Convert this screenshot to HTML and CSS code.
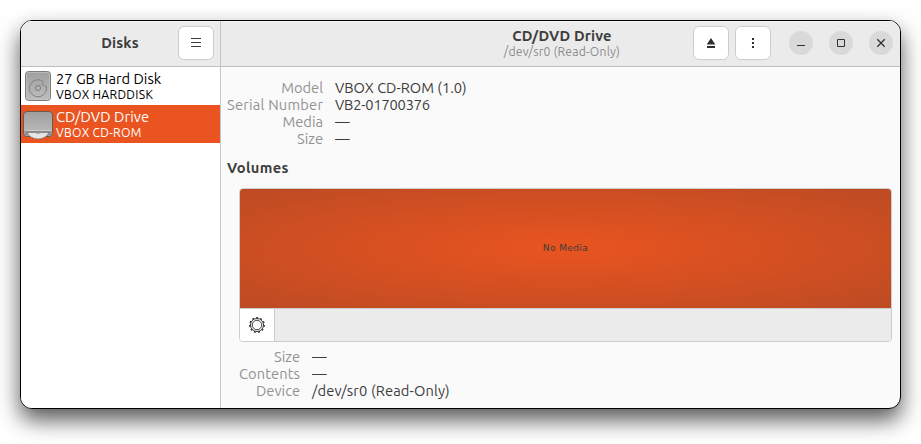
FILE: index.html
```html
<!DOCTYPE html>
<html lang="en">
<head>
<meta charset="utf-8">
<title>Disks</title>
<link rel="stylesheet" href="styles.css">
</head>
<body>
<div class="window">
  <aside class="sidebar">
    <header class="bar side-bar">
      <h1 class="app-title"><span class="t-disks">Disks</span></h1>
      <button class="btn" aria-label="Menu"><svg width="16" height="16"><path d="M3 3.5h10M3 7.5h10M3 11.5h10" stroke="#3d3d3d"/></svg></button>
    </header>
    <ul class="drives">
      <li class="drive">
        <svg class="drive-icon" width="32" height="32" viewBox="0 0 32 32">
          <defs><linearGradient id="metal" x1="0" y1="0" x2="0" y2="1"><stop offset="0" stop-color="#9f9f9f"/><stop offset=".3" stop-color="#a8a8a8"/><stop offset="1" stop-color="#bebebe"/></linearGradient></defs>
          <rect x="2.5" y="1.5" width="25" height="29" rx="3" fill="url(#metal)" stroke="#7c7c7c"/>
          <rect x="3.5" y="2.5" width="23" height="27" rx="2" fill="none" stroke="#c6c6c6" stroke-opacity=".6"/>
          <path d="M20.5 11.8A8.5 8.5 0 1 0 23.3 16.5M20.5 11.8Q17.500 14 19.500 15T23.3 16.5" fill="none" stroke="#808080"/>
          <circle cx="15" cy="18" r="2.6" fill="none" stroke="#808080"/>
        </svg>
        <div class="drive-text"><span class="name t-hd">27 GB Hard Disk</span><span class="model t-hdm">VBOX HARDDISK</span></div>
      </li>
      <li class="drive selected">
        <svg class="drive-icon" width="32" height="32" viewBox="0 0 32 32">
          <rect x=".5" y="3.5" width="29" height="25" rx="3.5" fill="url(#metal)" stroke="#6a5a55"/>
          <path d="M1.500 22.500h27v2.500q0 2.500-2.500 2.500h-22q-2.500 0-2.500-2.500z" fill="#8c8c8c"/>
          <path d="M2 22.500h26" stroke="#ccc"/>
          <path d="M4 24.500h22q-3.500 6.500-11 6.500t-11-6.500z" fill="#e6e6e6" stroke="#777" stroke-width=".7"/>
          <path d="M12 24.800q3 2.700 6 0z" fill="#aaa"/>
        </svg>
        <div class="drive-text"><span class="name t-cd">CD/DVD Drive</span><span class="model t-cdm">VBOX CD-ROM</span></div>
      </li>
    </ul>
  </aside>
  <main class="main">
    <header class="bar main-bar">
      <div class="heading"><h2><span class="t-title">CD/DVD Drive</span></h2><p><span class="t-sub">/dev/sr0 (Read-Only)</span></p></div>
      <div class="actions">
        <button class="btn" aria-label="Eject"><svg width="16" height="16"><path d="M8 3l4.300 6.500H3.700zM4 11h8v2H4z" fill="#303030"/></svg></button>
        <button class="btn" aria-label="Drive options"><svg width="16" height="16"><path d="M7 3h2v2H7zM7 7h2v2H7zM7 11h2v2H7z" fill="#303030"/></svg></button>
      </div>
      <div class="controls">
        <button class="round" aria-label="Minimize"><svg width="16" height="16"><path d="M4 10.500h8" stroke="#303030"/></svg></button>
        <button class="round" aria-label="Maximize"><svg width="16" height="16"><path d="M4.500 4.500h7v7h-7z" fill="none" stroke="#303030"/></svg></button>
        <button class="round" aria-label="Close"><svg width="16" height="16"><path d="M4.300 4.300l7.400 7.400M11.700 4.300l-7.400 7.400" stroke="#303030" stroke-width="1.300"/></svg></button>
      </div>
    </header>
    <section class="content">
      <dl class="info info-drive">
        <dt><span class="t-model">Model</span></dt><dd><span class="t-vbox">VBOX CD-ROM (1.0)</span></dd>
        <dt><span class="t-serial">Serial Number</span></dt><dd><span class="t-sn">VB2-01700376</span></dd>
        <dt><span class="t-media">Media</span></dt><dd><span class="dash">—</span></dd>
        <dt><span class="t-size">Size</span></dt><dd><span class="dash">—</span></dd>
      </dl>
      <h3><span class="t-vol">Volumes</span></h3>
      <div class="volume">
        <div class="media"><span class="t-nomedia">No Media</span></div>
        <div class="toolbar">
          <button class="gear" aria-label="Volume options"><svg width="18" height="18" viewBox="0 0 18 18"><g fill="none" stroke="#303030"><circle cx="9" cy="9" r="6.500" stroke-width="1"/><circle cx="9" cy="9" r="4.700" stroke-width=".9"/><circle cx="9" cy="9" r="7.300" stroke-width="1.200" stroke-dasharray="2 2.170"/></g></svg></button>
        </div>
      </div>
      <dl class="info info-volume">
        <dt><span class="t-size">Size</span></dt><dd><span class="dash">—</span></dd>
        <dt><span class="t-contents">Contents</span></dt><dd><span class="dash">—</span></dd>
        <dt><span class="t-device">Device</span></dt><dd><span class="t-dev">/dev/sr0 (Read-Only)</span></dd>
      </dl>
    </section>
  </main>
</div>
</body>
</html>
```
FILE: styles.css
```css
* { box-sizing: border-box; margin: 0; padding: 0; }
body { height: 444px; padding: 20px; background: #fff; overflow: hidden; font: 14.667px/17px Ubuntu, "Noto Sans", sans-serif; color: #3d3d3d; }
span { white-space: nowrap; }
button { border: 0; display: flex; align-items: center; justify-content: center; flex: none; }
.window { width: 881px; height: 389px; display: flex; border: 1px solid #000; border-radius: 12px; overflow: hidden; background: #fafafa; box-shadow: 0 11px 22px rgba(0,0,0,.66); }
.sidebar { width: 200px; flex: none; background: #fff; border-right: 1px solid #c4c4c4; }
.main { flex: 1; min-width: 0; }
.bar { height: 46px; display: flex; background: #ebebeb; border-bottom: 1px solid #bfbfbf; align-items: flex-start; box-shadow: inset 0 1px #f5f5f5; }
.app-title { flex: 1; padding-left: 41px; text-align: center; font-size: 14.667px; line-height: 20px; padding-top: 12px; letter-spacing: .15px; }
.side-bar { padding-right: 6px; }
.btn { width: 36px; height: 34px; margin-top: 5px; background: #fff; border: 1px solid #cdcdcd; border-radius: 6px; }
.drives { list-style: none; }
.drive { height: 38px; display: flex; align-items: center; padding-left: 2px; color: #000; }
.drive-icon { flex: none; margin-right: 1px; }
.drive-text { display: flex; flex-direction: column; align-items: flex-start; }
.name { line-height: 17px; }
.model { font-size: 12.2px; line-height: 14px; letter-spacing: .3px; margin-top: 1px; }
.selected { background: #e95420; color: #fff; }
.main-bar { padding-right: 7px; }
.heading { flex: 1; padding-left: 210px; text-align: center; padding-top: 6px; }
.heading h2 { font-size: 14.667px; line-height: 18px; letter-spacing: .2px; }
.heading p { font-size: 12.2px; line-height: 14px; color: #8b8b8b; letter-spacing: .2px; }
.actions { display: flex; gap: 6px; }
.controls { display: flex; gap: 16px; margin: 10px 0 0 18px; }
.round { width: 24px; height: 24px; border-radius: 50%; background: #d9d9d9; }
.content { padding: 12px 8px 0 6px; }
.info { display: grid; column-gap: 12px; grid-auto-rows: 17px; }
.info-drive { grid-template-columns: 96px 1fr; }
.info dt { text-align: right; color: #929292; }
h3 { font-size: 14.667px; line-height: 20px; margin-top: 11px; letter-spacing: .35px; }
.t-serial { letter-spacing: .22px; }
.t-sn { letter-spacing: -.2px; }
.t-contents, .t-cd { letter-spacing: .1px; }
.t-dev { letter-spacing: .14px; }
.volume { height: 154px; margin: 10px 0 0 12px; border: 1px solid #cdcdcd; border-radius: 4px; overflow: hidden; }
.media { height: 119px; padding-bottom: 1px; display: flex; align-items: center; justify-content: center; font: 9px/12px "DejaVu Sans", sans-serif; letter-spacing: .4px; background: radial-gradient(ellipse farthest-corner at center, #e95420, #bd4b23); }
.toolbar { height: 33px; background: #ebebeb; border-top: 1px solid #cdcdcd; }
.gear { width: 35px; height: 32px; background: #fff; border-right: 1px solid #cdcdcd; }
.info-volume { grid-template-columns: 61px 1fr; margin: 6px 0 0 12px; }
.dash { display: inline-block; width: 15px; overflow: hidden; vertical-align: top; }
```
